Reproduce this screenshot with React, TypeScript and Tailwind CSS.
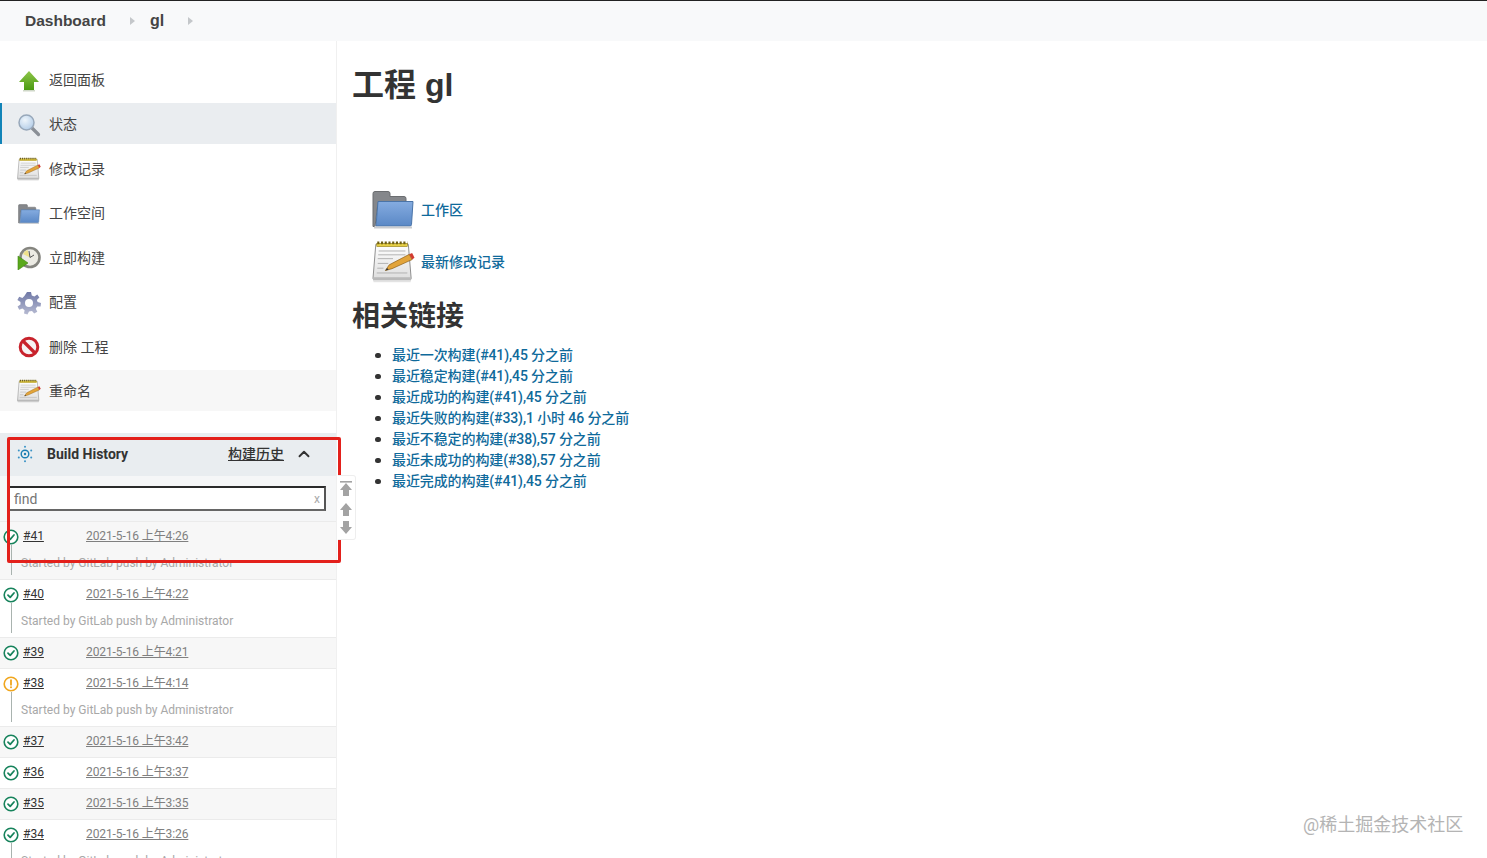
import React from "react";
import { ChevronUp } from "lucide-react";

function ArrowIcon() {
  return (
    <svg width="24" height="24" viewBox="0 0 24 24">
      <defs>
        <linearGradient id="ga" x1="0" y1="0" x2="0" y2="1">
          <stop offset="0" stopColor="#8fc64a" />
          <stop offset="1" stopColor="#4a9a12" />
        </linearGradient>
      </defs>
      <path d="M12 2 L22 13 H17 V21 H7 V13 H2 Z" fill="url(#ga)" />
      <rect x="6" y="21" width="12" height="1.5" fill="#cfd8c8" />
    </svg>
  );
}
function SearchIcon() {
  return (
    <svg width="24" height="24" viewBox="0 0 24 24">
      <defs>
        <radialGradient id="gs" cx="0.4" cy="0.35" r="0.8">
          <stop offset="0" stopColor="#eef5fb" />
          <stop offset="1" stopColor="#a9c6e4" />
        </radialGradient>
      </defs>
      <line x1="14.5" y1="14.5" x2="21.5" y2="21.5" stroke="#8a8f96" strokeWidth="3.2" strokeLinecap="round" />
      <circle cx="9.5" cy="9.5" r="7.5" fill="url(#gs)" stroke="#98a8ba" strokeWidth="1.5" />
    </svg>
  );
}
function NotepadIcon({ id, size = 24 }: { id: string; size?: number }) {
  return (
    <svg width={size} height={size} viewBox="0 0 45 44">
      <defs>
        <linearGradient id={id} x1="0" y1="0" x2="0" y2="1">
          <stop offset="0" stopColor="#ffffff" />
          <stop offset="1" stopColor="#dedede" />
        </linearGradient>
      </defs>
      <path d="M4 4 H38 L41 40 H1 Z" fill={`url(#${id})`} stroke="#8a8a8a" strokeWidth="1" />
      <rect x="1" y="38.5" width="40" height="3.5" rx="1" fill="#b9b9b9" />
      <rect x="1.5" y="42.2" width="39" height="1.5" fill="#e3e3e3" />
      <rect x="5" y="3" width="32" height="3.5" fill="#e6cf45" stroke="#8f7a18" strokeWidth="0.6" />
      <line x1="5.5" y1="2.5" x2="37" y2="2.5" stroke="#6f5f14" strokeWidth="3" strokeDasharray="2.2 1.7" />
      <g stroke="#b0b0b0" strokeWidth="1">
        <line x1="7" y1="11" x2="35" y2="11" />
        <line x1="6.5" y1="15" x2="35" y2="15" />
        <line x1="6" y1="19" x2="22" y2="19" />
        <line x1="6" y1="24" x2="17" y2="24" />
        <line x1="5.5" y1="29" x2="12" y2="29" />
        <line x1="5" y1="34" x2="37" y2="34" />
      </g>
      <path d="M14 31.5 L18 25.5 L39 14.5 L42 20 L21 29.5 Z" fill="#e2a43a" stroke="#8a5d16" strokeWidth="0.7" />
      <path d="M39 14.5 L42 13 L44.5 18 L42 20 Z" fill="#d23b30" />
      <path d="M14 31.5 L15.8 28.8 L17.4 30.6 Z" fill="#333" />
    </svg>
  );
}
function FolderIcon({ id, w = 22, h = 20 }: { id: string; w?: number; h?: number }) {
  return (
    <svg width={w} height={h} viewBox="0 0 42 38">
      <defs>
        <linearGradient id={id} x1="0" y1="0" x2="0" y2="1">
          <stop offset="0" stopColor="#85ace0" />
          <stop offset="1" stopColor="#5a88c6" />
        </linearGradient>
      </defs>
      <path d="M1 3 Q1 1 3 1 H16 Q18 1 18 3 V6 H32 Q34 6 34 8 V12 H6 L3 36 H1 Z" fill="#85878b" stroke="#6b6d70" />
      <path d="M6 11 H41 L39.5 34 Q39.5 35.5 38 35.5 H4 Z" fill={`url(#${id})`} stroke="#4a74a8" />
      <rect x="2" y="36" width="38" height="2" fill="#c9ccd0" />
    </svg>
  );
}
function ClockIcon() {
  return (
    <svg width="24" height="24" viewBox="0 0 24 24">
      <circle cx="13" cy="11.5" r="9.5" fill="#ecebe4" stroke="#85857f" strokeWidth="2.6" />
      <path d="M13 11.5 L10.5 4 A8 8 0 0 0 6 8 Z" fill="#efe08a" />
      <path d="M13 11.5 L17 9" stroke="#555" strokeWidth="1" />
      <path d="M13 11.5 L12 5" stroke="#555" strokeWidth="1" />
      <path d="M1 10 L11 17 L1 24 Z" fill="#5aa91c" stroke="#3f8410" strokeWidth="0.6" />
    </svg>
  );
}
function GearIcon() {
  return (
    <svg width="24" height="24" viewBox="0 0 24 24">
      <defs>
        <linearGradient id="gg" x1="0" y1="0" x2="0" y2="1">
          <stop offset="0" stopColor="#6f78a6" />
          <stop offset="1" stopColor="#b7bbd2" />
        </linearGradient>
      </defs>
      <path
        d="M10 1 H14 L14.8 4.4 L17.4 5.5 L20.3 3.6 L22.4 6.6 L19.9 8.9 L20.6 11 L24 12 L23.6 15.5 L20.2 15.4 L18.8 17.7 L20.3 20.8 L17.2 22.6 L15 20 L12 20.6 L10.5 23.6 L7 22.6 L7.6 19.2 L5.4 17.5 L2.2 18.8 L0.6 15.6 L3.5 13.6 L3.5 11 L0.4 9 L2.2 5.8 L5.4 7 L7.4 5 Z"
        fill="url(#gg)"
      />
      <circle cx="12" cy="12" r="4" fill="#fff" />
    </svg>
  );
}
function StopIcon() {
  return (
    <svg width="24" height="24" viewBox="0 0 24 24">
      <circle cx="12" cy="12" r="8.8" fill="#f6f3f3" stroke="#c8232c" strokeWidth="3" />
      <line x1="6" y1="6" x2="18" y2="18" stroke="#c8232c" strokeWidth="3.2" />
    </svg>
  );
}
function SunIcon() {
  return (
    <svg width="18" height="18" viewBox="0 0 18 18" fill="none">
      <circle cx="9" cy="9" r="3.8" stroke="#1d7fb3" strokeWidth="1.4" />
      <circle cx="9" cy="9" r="1.2" fill="#1d7fb3" />
      <g fill="#3a93c6">
        <circle cx="9" cy="1.8" r="1" />
        <circle cx="9" cy="16.2" r="1" />
        <circle cx="2.8" cy="5.4" r="1" />
        <circle cx="15.2" cy="5.4" r="1" />
        <circle cx="2.8" cy="12.6" r="1" />
        <circle cx="15.2" cy="12.6" r="1" />
      </g>
    </svg>
  );
}
function SuccessIcon() {
  return (
    <svg width="16" height="16" viewBox="0 0 16 16" fill="none">
      <circle cx="8" cy="8" r="6.8" fill="#fff" stroke="#17835c" strokeWidth="1.6" />
      <path d="M5 8.2 L7.2 10.3 L11 6" stroke="#17835c" strokeWidth="1.8" strokeLinecap="round" strokeLinejoin="round" />
    </svg>
  );
}
function WarnIcon() {
  return (
    <svg width="16" height="16" viewBox="0 0 16 16" fill="none">
      <circle cx="8" cy="8" r="6.8" fill="#fff" stroke="#f0a61e" strokeWidth="1.6" />
      <line x1="8" y1="4.2" x2="8" y2="8.8" stroke="#f0a61e" strokeWidth="1.8" strokeLinecap="round" />
      <circle cx="8" cy="11.2" r="1" fill="#f0a61e" />
    </svg>
  );
}
function Caret() {
  return (
    <svg width="5" height="8" viewBox="0 0 5 8">
      <path d="M0 0 L5 4 L0 8 Z" fill="#c4c7ca" />
    </svg>
  );
}
function ScrollGlyph({ kind }: { kind: "top" | "up" | "down" }) {
  return (
    <svg width="12" height="15" viewBox="0 0 12 15" fill="#a3a3a3">
      {kind === "top" && <rect x="0" y="0" width="12" height="1.6" />}
      {kind === "down" ? (
        <path d="M3 1 H9 V7 H12 L6 14 L0 7 H3 Z" />
      ) : (
        <path d="M6 2 L12 9 H9 V15 H3 V9 H0 Z" />
      )}
    </svg>
  );
}

const tasks: { label: string; icon: React.ReactNode; cls: string }[] = [
  { label: "返回面板", icon: <ArrowIcon />, cls: "" },
  { label: "状态", icon: <SearchIcon />, cls: "bg-[#eaedf0] border-l-2 border-[#1284b8]" },
  { label: "修改记录", icon: <NotepadIcon id="n1" />, cls: "" },
  { label: "工作空间", icon: <FolderIcon id="f1" />, cls: "" },
  { label: "立即构建", icon: <ClockIcon />, cls: "" },
  { label: "配置", icon: <GearIcon />, cls: "" },
  { label: "删除 工程", icon: <StopIcon />, cls: "" },
  { label: "重命名", icon: <NotepadIcon id="n2" />, cls: "bg-[#f7f7f7]" },
];

const builds = [
  { n: "#41", d: "2021-5-16 上午4:26", desc: true, warn: false },
  { n: "#40", d: "2021-5-16 上午4:22", desc: true, warn: false },
  { n: "#39", d: "2021-5-16 上午4:21", desc: false, warn: false },
  { n: "#38", d: "2021-5-16 上午4:14", desc: true, warn: true },
  { n: "#37", d: "2021-5-16 上午3:42", desc: false, warn: false },
  { n: "#36", d: "2021-5-16 上午3:37", desc: false, warn: false },
  { n: "#35", d: "2021-5-16 上午3:35", desc: false, warn: false },
  { n: "#34", d: "2021-5-16 上午3:26", desc: true, warn: false },
];

const links = [
  "最近一次构建(#41),45 分之前",
  "最近稳定构建(#41),45 分之前",
  "最近成功的构建(#41),45 分之前",
  "最近失败的构建(#33),1 小时 46 分之前",
  "最近不稳定的构建(#38),57 分之前",
  "最近未成功的构建(#38),57 分之前",
  "最近完成的构建(#41),45 分之前",
];

export default function App() {
  return (
    <div className="relative h-[858px] overflow-hidden bg-white font-['Roboto','Noto_Sans_CJK_SC',sans-serif] text-[#333]">
      <header className="flex h-[41px] items-center border-t border-[#222] bg-[#f8f9fa] pl-[25px] font-['Liberation_Sans','Noto_Sans_CJK_SC',sans-serif]">
        <span className="text-[15.5px] font-bold leading-none text-[#444]">Dashboard</span>
        <span className="ml-[24px]"><Caret /></span>
        <span className="ml-[15px] text-[16px] font-bold leading-none text-[#444]">gl</span>
        <span className="ml-[24px]"><Caret /></span>
      </header>

      <div className="flex h-[817px]">
        <aside className="w-[337px] shrink-0 border-r border-[#f0f0f0] pt-[18px]">
          <nav className="flex flex-col">
            {tasks.map((t) => (
              <div key={t.label} className={`mb-[3.43px] flex h-[41px] items-center pl-[17px] pt-[2px] ${t.cls}`}>
                <span className={`flex h-6 w-6 items-center justify-center ${t.cls.includes("border-l") ? "-ml-[2px]" : ""}`}>{t.icon}</span>
                <span className="ml-2 text-[14px] text-[#444]">{t.label}</span>
              </div>
            ))}
          </nav>

          <section className="mt-[18.6px]">
            <div className="flex h-[43px] items-center bg-[#e9edf0] pl-[16px]">
              <SunIcon />
              <span className="ml-[13px] text-[14px] font-bold text-[#333]">Build History</span>
              <span className="ml-[auto] text-[14px] font-medium text-[#333] underline">构建历史</span>
              <ChevronUp className="ml-[11px] mr-[23px]" size={18} strokeWidth={2.5} color="#333" />
            </div>
            <div className="bg-[#f5f6f7] pb-[10px] pl-[8px] pr-[10px] pt-[10px]">
              <div className="flex h-[25px] items-center justify-between border-2 border-t-[#2b2b2b] border-l-[#2b2b2b] border-r-[#555] border-b-[#666] bg-white pl-[4px] pr-[4px] pt-[2px]">
                <span className="text-[14px] leading-none text-[#757575]">find</span>
                <span className="text-[12px] leading-none text-[#aaa]">x</span>
              </div>
            </div>
            {builds.map((b, i) => (
              <div
                key={b.n}
                className={`flex border-t border-[#ebebeb] pl-[3px] ${i % 2 === 0 ? "bg-[#f7f7f7]" : "bg-white"} ${b.desc ? "h-[58px]" : "h-[31px]"}`}
              >
                <div className="flex w-[16px] shrink-0 flex-col items-center pt-[7px]">
                  {b.warn ? <WarnIcon /> : <SuccessIcon />}
                  {b.desc && <div className="h-[30px] w-px bg-[#a9b3af]" />}
                </div>
                <div className="flex min-w-0 flex-col">
                  <div className="flex h-[29px] items-center text-[12px]">
                    <span className="ml-[4px] w-[63px] font-normal text-[#333] underline">{b.n}</span>
                    <span className="tracking-[-0.1px] text-[#808080] underline">{b.d}</span>
                  </div>
                  {b.desc && <div className="ml-[2px] whitespace-nowrap text-[12px] leading-[24px] text-[#a8a8a8]">Started by GitLab push by Administrator</div>}
                </div>
              </div>
            ))}
          </section>
        </aside>

        <main className="flex-1 pl-[15px] pt-[20px]">
          <h1 className="font-['Liberation_Sans','Noto_Sans_CJK_SC',sans-serif] text-[32px] font-bold leading-[48px] text-[#333]">工程 gl</h1>
          <div className="mt-[78px] flex h-[44px] items-center pl-[20px]">
            <FolderIcon id="f2" w={42} h={39} />
            <a className="ml-[7px] pt-[2px] text-[14px] font-medium text-[#0f6a9b]">工作区</a>
          </div>
          <div className="mt-[6px] flex h-[48px] items-center pl-[20px]">
            <NotepadIcon id="n3" size={43} />
            <a className="ml-[6px] pt-[2px] text-[14px] font-medium text-[#0f6a9b]">最新修改记录</a>
          </div>
          <h2 className="mt-[10px] text-[28px] font-bold leading-[44px] text-[#333]">相关链接</h2>
          <ul className="mt-[6px] flex flex-col pl-[23px]">
            {links.map((l) => (
              <li key={l} className="flex h-[21px] items-center text-[14px] font-medium tracking-[-0.1px] text-[#0f6a9b]">
                <span className="mr-[11.5px] h-[5.5px] w-[5.5px] shrink-0 rounded-full bg-[#333]" />
                {l}
              </li>
            ))}
          </ul>
        </main>
      </div>

      <div className="absolute left-[7px] top-[437px] h-[126px] w-[334px] rounded-[2px] border-[3px] border-[#e3201b]" />

      <div className="absolute left-[338px] top-[475px] flex h-[65px] w-[18px] flex-col items-center gap-[4.5px] rounded-r-[3px] border border-l-0 border-[#eeeeee] bg-white pr-[2px] pt-[5px]">
        <ScrollGlyph kind="top" />
        <ScrollGlyph kind="up" />
        <ScrollGlyph kind="down" />
      </div>

      <div className="absolute left-[1303px] top-[812px] text-[18px] leading-[26px] text-[#b4b4b4]">@稀土掘金技术社区</div>
    </div>
  );
}
